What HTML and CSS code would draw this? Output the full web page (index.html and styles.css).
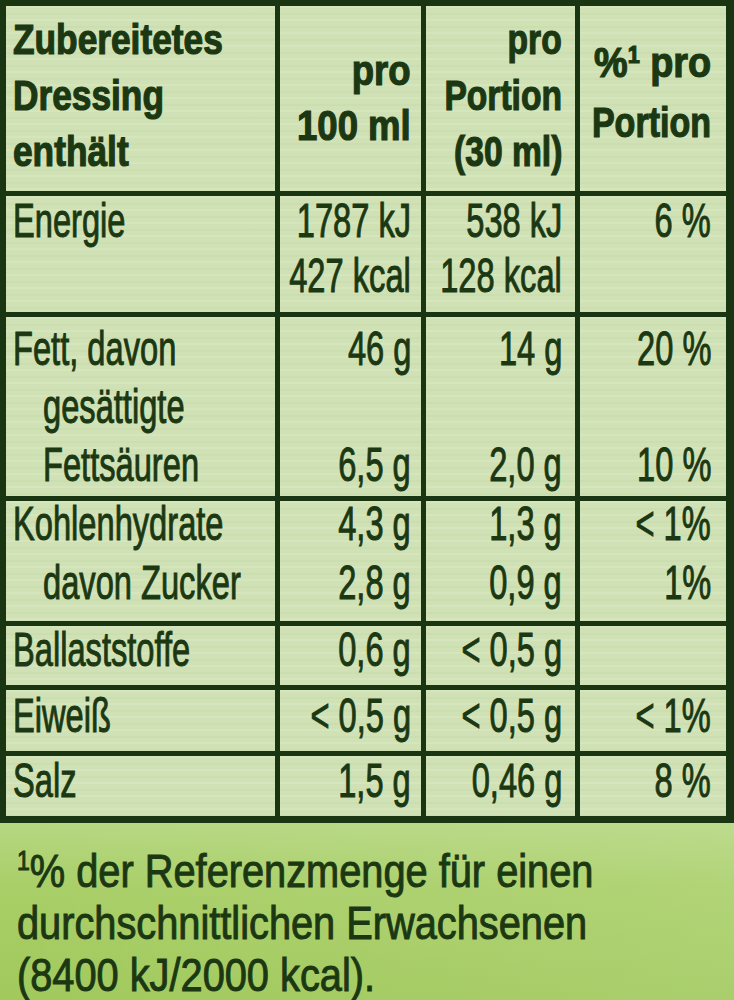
FILE: index.html
```html
<!DOCTYPE html>
<html lang="de">
<head>
<meta charset="utf-8">
<title>Nährwerte</title>
<link rel="stylesheet" href="styles.css">
</head>
<body>
<div class="label">
  <div class="grid">
    <div class="cell l hd h1"><div class="in">
      <div class="ln"><span>Zubereitetes</span></div>
      <div class="ln"><span>Dressing</span></div>
      <div class="ln"><span>enthält</span></div>
    </div></div>
    <div class="cell r c2 hd h2"><div class="in">
      <div class="ln"><span>pro</span></div>
      <div class="ln"><span>100 ml</span></div>
    </div></div>
    <div class="cell r c3 hd h3"><div class="in">
      <div class="ln"><span>pro</span></div>
      <div class="ln"><span>Portion</span></div>
      <div class="ln"><span>(30 ml)</span></div>
    </div></div>
    <div class="cell r c4 hd h4"><div class="in">
      <div class="ln"><span class="wide">%<sup class="hsup">1</sup> pro</span></div>
      <div class="ln"><span>Portion</span></div>
    </div></div>

    <div class="cell l en"><div class="in">
      <div class="ln"><span>Energie</span></div>
    </div></div>
    <div class="cell r c2 en"><div class="in">
      <div class="ln"><span>1787 kJ</span></div>
      <div class="ln"><span>427 kcal</span></div>
    </div></div>
    <div class="cell r c3 en"><div class="in">
      <div class="ln"><span>538 kJ</span></div>
      <div class="ln"><span>128 kcal</span></div>
    </div></div>
    <div class="cell r c4 en"><div class="in">
      <div class="ln"><span>6 %</span></div>
    </div></div>

    <div class="cell l fe"><div class="in">
      <div class="ln"><span>Fett, davon</span></div>
      <div class="ln ind"><span>gesättigte</span></div>
      <div class="ln ind"><span>Fettsäuren</span></div>
    </div></div>
    <div class="cell r c2 fe"><div class="in">
      <div class="ln"><span>46 g</span></div>
      <div class="ln"><span>&nbsp;</span></div>
      <div class="ln"><span>6,5 g</span></div>
    </div></div>
    <div class="cell r c3 fe"><div class="in">
      <div class="ln"><span>14 g</span></div>
      <div class="ln"><span>&nbsp;</span></div>
      <div class="ln"><span>2,0 g</span></div>
    </div></div>
    <div class="cell r c4 fe"><div class="in">
      <div class="ln"><span>20 %</span></div>
      <div class="ln"><span>&nbsp;</span></div>
      <div class="ln"><span>10 %</span></div>
    </div></div>

    <div class="cell l kh"><div class="in">
      <div class="ln"><span>Kohlenhydrate</span></div>
      <div class="ln ind"><span>davon Zucker</span></div>
    </div></div>
    <div class="cell r c2 kh"><div class="in">
      <div class="ln"><span>4,3 g</span></div>
      <div class="ln"><span>2,8 g</span></div>
    </div></div>
    <div class="cell r c3 kh"><div class="in">
      <div class="ln"><span>1,3 g</span></div>
      <div class="ln"><span>0,9 g</span></div>
    </div></div>
    <div class="cell r c4 kh"><div class="in">
      <div class="ln"><span>&lt; 1%</span></div>
      <div class="ln"><span>1%</span></div>
    </div></div>

    <div class="cell l ba"><div class="in">
      <div class="ln"><span>Ballaststoffe</span></div>
    </div></div>
    <div class="cell r c2 ba"><div class="in">
      <div class="ln"><span>0,6 g</span></div>
    </div></div>
    <div class="cell r c3 ba"><div class="in">
      <div class="ln"><span>&lt; 0,5 g</span></div>
    </div></div>
    <div class="cell r c4 ba"></div>

    <div class="cell l ei"><div class="in">
      <div class="ln"><span>Eiweiß</span></div>
    </div></div>
    <div class="cell r c2 ei"><div class="in">
      <div class="ln"><span>&lt; 0,5 g</span></div>
    </div></div>
    <div class="cell r c3 ei"><div class="in">
      <div class="ln"><span>&lt; 0,5 g</span></div>
    </div></div>
    <div class="cell r c4 ei"><div class="in">
      <div class="ln"><span>&lt; 1%</span></div>
    </div></div>

    <div class="cell l sa"><div class="in">
      <div class="ln"><span>Salz</span></div>
    </div></div>
    <div class="cell r c2 sa"><div class="in">
      <div class="ln"><span>1,5 g</span></div>
    </div></div>
    <div class="cell r c3 sa"><div class="in">
      <div class="ln"><span>0,46 g</span></div>
    </div></div>
    <div class="cell r c4 sa"><div class="in">
      <div class="ln"><span>8 %</span></div>
    </div></div>
  </div>

  <div class="foot">
    <div class="fl"><span><sup class="fsup">1</sup>% der Referenzmenge für einen</span></div>
    <div class="fl"><span>durchschnittlichen Erwachsenen</span></div>
    <div class="fl"><span>(8400 kJ/2000 kcal).</span></div>
  </div>
</div>
</body>
</html>
```

FILE: styles.css
```css
* { box-sizing: border-box; }

html, body {
  margin: 0;
  padding: 0;
}

body {
  background: #a6cc62;
  font-family: "Liberation Sans", Arial, sans-serif;
  color: #1b3813;
}

.label {
  width: 734px;
  height: 1000px;
  overflow: hidden;
}

.grid {
  display: grid;
  grid-template-columns: 269px 141px 149px 146px;
  grid-template-rows: 185px 116px 179px 120px 59px 61px 60px;
  gap: 5px;
  padding: 6px 8px 7px 6px;
  background: #1a3511;
}

.cell {
  background-color: #d0e2b5;
  background-image:
    repeating-linear-gradient(180deg,
      rgba(255,255,255,0.10) 0 2px,
      rgba(255,255,255,0) 2px 7px,
      rgba(120,150,90,0.05) 7px 9px,
      rgba(255,255,255,0) 9px 13px);
  font-size: 48px;
  font-weight: 400;
  -webkit-text-stroke: 1px #1b3813;
  --lh: 58px;
  --pt: 0px;
  --sx: 0.68;
}

.in {
  margin-top: var(--pt);
}

.ln {
  display: flex;
  white-space: nowrap;
  line-height: var(--lh);
  height: var(--lh);
}

.ln span {
  display: block;
  flex: none;
  transform: scaleX(var(--sx));
  transform-origin: left center;
}

.l { padding-left: 7px; }
.ind { padding-left: 30px; }

.r .ln { justify-content: flex-end; }
.r .ln span { transform-origin: right center; }

.c2 { padding-right: 10px; }
.c3 { padding-right: 13px; }
.c4 { padding-right: 15px; }

/* header */
.hd {
  font-size: 42px;
  font-weight: 700;
  -webkit-text-stroke: 1.2px #1b3813;
  --sx: 0.84;
}
.h1 { --lh: 56px; --pt: 6px; }
.h2 { --lh: 55px; --pt: 37px; --sx: 0.87; }
.h3 { --lh: 56px; --pt: 6px; --sx: 0.8; }
.h4 { --lh: 60px; --pt: 27px; --sx: 0.81; }
.h4 .wide { transform: scaleX(0.9); }

.hsup {
  font-size: 24px;
  vertical-align: 14px;
  line-height: 0;
}

/* body rows */
.en { --lh: 55px; --pt: -3px; }
.fe { --lh: 58px; --pt: 3px; }
.kh { --lh: 59px; --pt: -7px; }
.ba { --lh: 58px; --pt: -5px; }
.ei { --lh: 58px; --pt: -3px; }
.sa { --lh: 58px; --pt: -4px; }

/* footnote */
.foot {
  height: 177px;
  padding: 22px 0 0 17px;
  background:
    linear-gradient(90deg, rgba(255,255,255,0) 0%, rgba(255,255,255,0.06) 60%, rgba(255,255,255,0.1) 100%),
    linear-gradient(180deg, #b6d781 0%, #a9cf68 35%, #a1c95c 100%);
  font-size: 46.5px;
  line-height: 52px;
}

.fl {
  display: flex;
  white-space: nowrap;
  height: 52px;
}

.fl span {
  display: block;
  flex: none;
  transform: scaleX(0.855);
  transform-origin: left center;
  -webkit-text-stroke: 1px #1b3813;
}

.fsup {
  font-size: 27px;
  vertical-align: 17px;
  line-height: 0;
}
```
